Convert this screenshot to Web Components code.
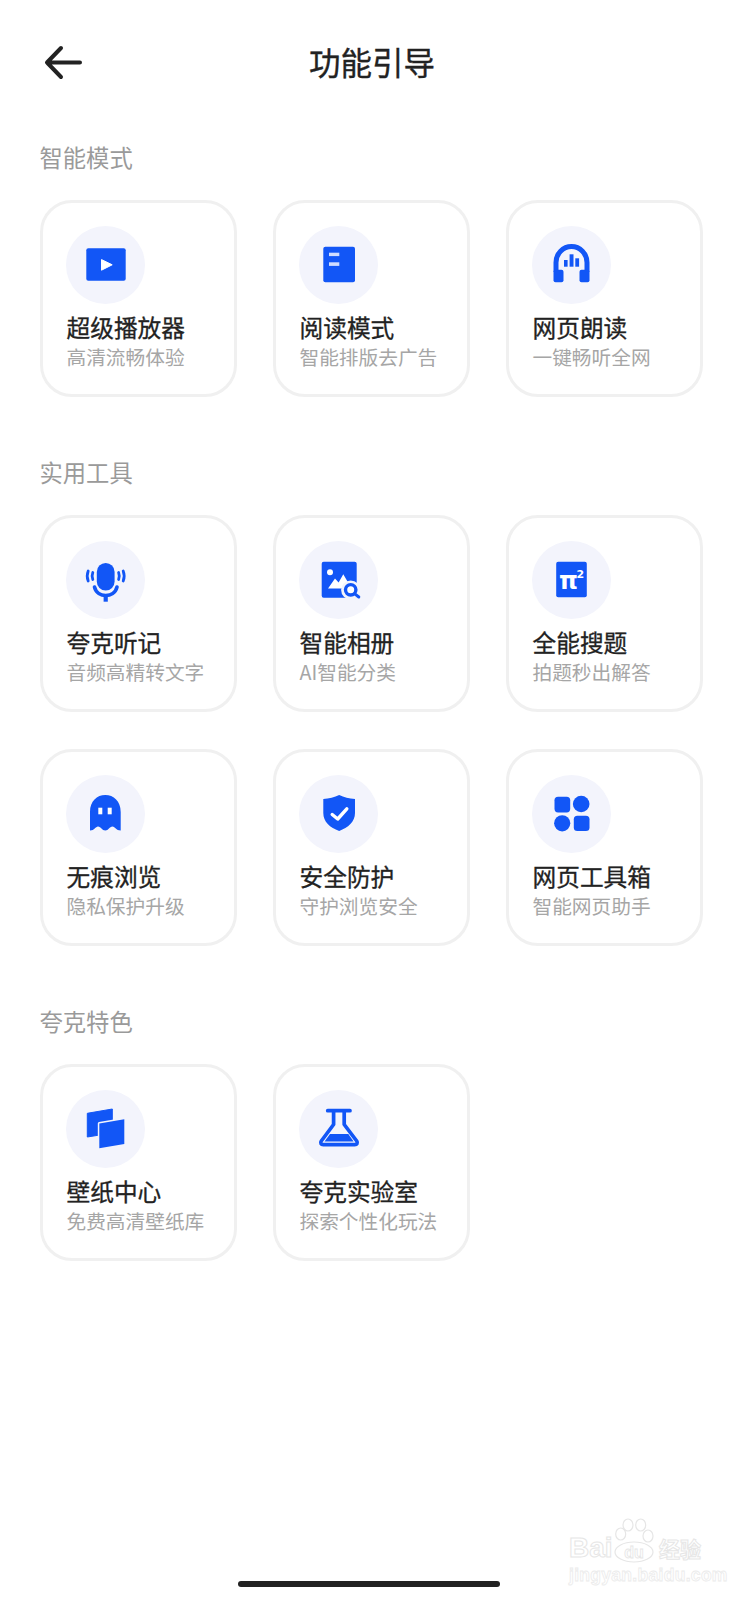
<!DOCTYPE html>
<html lang="zh">
<head>
<meta charset="utf-8">
<title>功能引导</title>
<style>
    html, body { margin: 0; background: #fff; }
    body { font-family: "Noto Sans CJK SC", "Noto Sans", sans-serif; }
</style>
</head>
<body>
<guide-page>
    <guide-header slot="header" title="功能引导"></guide-header>
    <guide-section label="智能模式">
        <guide-card icon="play" title="超级播放器" sub="高清流畅体验"></guide-card>
        <guide-card icon="book" title="阅读模式" sub="智能排版去广告"></guide-card>
        <guide-card icon="headphones" title="网页朗读" sub="一键畅听全网"></guide-card>
    </guide-section>
    <guide-section label="实用工具">
        <guide-card icon="mic" title="夸克听记" sub="音频高精转文字"></guide-card>
        <guide-card icon="album" title="智能相册" sub="AI智能分类"></guide-card>
        <guide-card icon="pi" title="全能搜题" sub="拍题秒出解答"></guide-card>
        <guide-card icon="ghost" title="无痕浏览" sub="隐私保护升级"></guide-card>
        <guide-card icon="shield" title="安全防护" sub="守护浏览安全"></guide-card>
        <guide-card icon="apps" title="网页工具箱" sub="智能网页助手"></guide-card>
    </guide-section>
    <guide-section label="夸克特色">
        <guide-card icon="layers" title="壁纸中心" sub="免费高清壁纸库"></guide-card>
        <guide-card icon="flask" title="夸克实验室" sub="探索个性化玩法"></guide-card>
    </guide-section>
    <baidu-mark></baidu-mark>
    <home-bar></home-bar>
</guide-page>

<script>
// all icons share a 79x78 box, same as the pale circle behind them
const BLUE = '#1256f6';
const DISC = '#f3f4fc';
const ICONS = {
    play: `<rect x="20.3" y="22.3" width="39.4" height="32.4" rx="2" fill="${BLUE}"/>
        <path d="M35.5 33.6 L46.2 38.8 L35.5 44.2 Z" fill="#fff" stroke="#fff" stroke-width="1" stroke-linejoin="round"/>`,
    book: `<rect x="24.3" y="20.7" width="31.7" height="35.6" rx="2" fill="${BLUE}"/>
        <rect x="30" y="26.7" width="10.3" height="3.4" fill="#cfdcff"/>
        <rect x="30" y="36.3" width="10.3" height="3.6" fill="#cfdcff"/>`,
    headphones: `<path d="M24 46 V36.5 A15.5 16 0 0 1 55 36.5 V46" fill="none" stroke="${BLUE}" stroke-width="5"/>
        <rect x="21.5" y="43.7" width="10" height="12.6" rx="2" fill="${BLUE}"/>
        <rect x="47.5" y="43.7" width="10" height="12.6" rx="2" fill="${BLUE}"/>
        <rect x="32" y="34" width="3.6" height="6.7" fill="${BLUE}"/>
        <rect x="37.6" y="28.3" width="3.9" height="12.4" fill="${BLUE}"/>
        <rect x="43.3" y="32.3" width="3.8" height="8.4" fill="${BLUE}"/>`,
    mic: `<rect x="30.8" y="22" width="17.8" height="27.5" rx="8.9" fill="${BLUE}"/>
        <path d="M28.5 46 C30 52 35 54.5 39.7 54.5 C44.5 54.5 49.5 52 51 46" fill="none" stroke="${BLUE}" stroke-width="3.6" stroke-linecap="round"/>
        <path d="M39.7 54.5 V60.7" stroke="${BLUE}" stroke-width="4.2"/>
        <path d="M22.2 30 C20.8 33.5 20.8 36.5 22.2 40 M26.8 31.5 C25.9 33.8 25.9 36.2 26.8 38.5 M52.6 31.5 C53.5 33.8 53.5 36.2 52.6 38.5 M57.2 30 C58.6 33.5 58.6 36.5 57.2 40" fill="none" stroke="${BLUE}" stroke-width="2.8" stroke-linecap="round"/>`,
    album: `<rect x="22.7" y="20.7" width="35" height="36" rx="2" fill="${BLUE}"/>
        <circle cx="31" cy="31.3" r="3" fill="#fff"/>
        <path d="M29 47.5 L36 37.5 L39.6 41.5 L44.3 33.3 L52.5 47.5 Z" fill="#fff"/>
        <circle cx="51.7" cy="49" r="9.6" fill="${DISC}"/>
        <circle cx="51.7" cy="48.8" r="5.2" fill="#fff" stroke="${BLUE}" stroke-width="3.4"/>
        <path d="M55.5 52.6 L59.8 56" stroke="${BLUE}" stroke-width="3" stroke-linecap="round"/>`,
    pi: `<rect x="24.2" y="20.7" width="30.6" height="35.6" rx="2" fill="${BLUE}"/>
        <text x="27" y="47.6" font-family="'DejaVu Sans', sans-serif" font-weight="700" font-size="24" fill="#fff">π</text>
        <text x="44.6" y="36.6" font-family="'DejaVu Sans', sans-serif" font-weight="700" font-size="11" fill="#fff">2</text>`,
    ghost: `<path d="M24 37 C24 26 31 20 39.3 20 C47.6 20 54.7 26 54.7 37 V55.5 C50 55.5 49 51.5 46.5 51.5 C43.5 51.5 42.5 55.5 39.3 55.5 C36 55.5 35 51.5 32 51.5 C29.5 51.5 28.5 55.5 24 55.5 Z" fill="${BLUE}"/>
        <rect x="32.3" y="32.7" width="4" height="6.6" fill="#fff"/>
        <rect x="41.7" y="32.7" width="4" height="6.6" fill="#fff"/>`,
    shield: `<path d="M40.2 20 C45 22.5 50 23.5 56 24 V38 C56 47 49 52.5 40.2 56 C31 52.5 24.3 47 24.3 38 V24 C30 23.5 35.5 22.5 40.2 20 Z" fill="${BLUE}"/>
        <path d="M33.2 39.5 L38.7 44 L47.8 33.8" fill="none" stroke="#fff" stroke-width="3.4" stroke-linecap="round" stroke-linejoin="round"/>`,
    apps: `<rect x="22.5" y="21.7" width="15.7" height="15.7" rx="3.6" fill="${BLUE}"/>
        <circle cx="49.2" cy="29" r="8.3" fill="${BLUE}"/>
        <circle cx="30.2" cy="48.3" r="8.1" fill="${BLUE}"/>
        <rect x="41.8" y="40.7" width="15.7" height="15.4" rx="3.6" fill="${BLUE}"/>`,
    layers: `<path d="M21.3 23.3 L46.3 19 V43 L21.3 47 Z" fill="${BLUE}" stroke="${BLUE}" stroke-width="1" stroke-linejoin="round"/>
        <path d="M33.3 33.5 L58.3 29.3 V54 L33.3 58.3 Z" fill="${BLUE}" stroke="${DISC}" stroke-width="3" paint-order="stroke" stroke-linejoin="round"/>`,
    flask: `<path d="M28.7 20.7 H51 M34.6 21 V34.5 L22.3 51 C21 53 22 54.6 24.3 54.6 H55.7 C58 54.6 59 53 57.7 51 L45.2 34.5 V21" fill="none" stroke="${BLUE}" stroke-width="3.7" stroke-linejoin="round" stroke-linecap="round"/>
        <path d="M31 44 H49.3 L54.6 51.4 H25.5 Z" fill="${BLUE}"/>`
};

class GuidePage extends HTMLElement {
    constructor() {
        super();
        this.attachShadow({mode: 'open'}).innerHTML = `
            <style>
                :host { display: block; position: relative; width: 742px; height: 1599px; overflow: hidden; background: #fff; }
                main { display: flex; flex-direction: column; gap: 58px; padding: 16px 39px 0 39.5px; }
            </style>
            <slot name="header"></slot>
            <main><slot></slot></main>
        `;
    }
}

class GuideHeader extends HTMLElement {
    connectedCallback() {
        this.attachShadow({mode: 'open'}).innerHTML = `
            <style>
                :host { display: grid; grid-template-columns: 1fr auto 1fr; align-items: center; height: 124px; padding: 0 38px 0 40px; box-sizing: border-box; }
                svg { display: block; }
                h1 { margin: -2px 0 0; font-size: 31.5px; line-height: 44px; font-weight: 400; -webkit-text-stroke: .35px #222; color: #222; }
            </style>
            <svg width="46" height="36" viewBox="0 0 46 36">
                <path d="M40 18.5 H7 M21 4 L7 18.5 L21 33" fill="none" stroke="#222" stroke-width="4" stroke-linecap="round" stroke-linejoin="round"/>
            </svg>
            <h1>${this.getAttribute('title')}</h1>
            <span></span>
        `;
    }
}

class GuideSection extends HTMLElement {
    connectedCallback() {
        this.attachShadow({mode: 'open'}).innerHTML = `
            <style>
                :host { display: block; }
                h2 { margin: 0 0 26px; font-size: 23.3px; line-height: 34px; font-weight: 400; color: #9a9a9a; }
                .grid { display: grid; grid-template-columns: repeat(3, 197.5px); column-gap: 35.5px; row-gap: 37px; }
            </style>
            <h2>${this.getAttribute('label')}</h2>
            <div class="grid"><slot></slot></div>
        `;
    }
}

class GuideCard extends HTMLElement {
    connectedCallback() {
        this.attachShadow({mode: 'open'}).innerHTML = `
            <style>
                :host { display: block; box-sizing: border-box; width: 197.5px; height: 197px; padding: 23px; border: 3px solid #f0f0f0; border-radius: 32px; background: #fff; }
                .disc { width: 79px; height: 78px; border-radius: 50%; background: ${DISC}; }
                svg { display: block; }
                .title { margin: 8px 0 0 1px; font-size: 23.7px; line-height: 30px; font-weight: 400; -webkit-text-stroke: .3px #222; color: #222; white-space: nowrap; }
                .sub { margin: 1px 0 0 1px; font-size: 19.7px; line-height: 28px; color: #a6a6a6; white-space: nowrap; }
            </style>
            <div class="disc"><svg width="79" height="78" viewBox="0 0 79 78">${ICONS[this.getAttribute('icon')]}</svg></div>
            <div class="title">${this.getAttribute('title')}</div>
            <div class="sub">${this.getAttribute('sub')}</div>
        `;
    }
}

class BaiduMark extends HTMLElement {
    constructor() {
        super();
        this.attachShadow({mode: 'open'}).innerHTML = `
            <style>
                :host { position: absolute; left: 567px; top: 1516px; width: 140px; height: 72px; display: block; color: transparent; font-family: "Liberation Sans", sans-serif; }
                svg { position: absolute; left: 44px; top: 0; }
                text { font-weight: 700; font-size: 16px; fill: transparent; stroke: #e6e6e6; stroke-width: .8px; }
                .row { position: absolute; left: 2px; top: 18px; width: 132px; display: flex; align-items: center; justify-content: space-between; font-size: 28px; line-height: 28px; font-weight: 700; -webkit-text-stroke: 1px #e6e6e6; }
                .cjk { font-family: "Noto Sans CJK SC", sans-serif; font-size: 21px; }
                .url { position: absolute; left: 2px; top: 48.5px; font-size: 17.5px; line-height: 20px; font-weight: 700; letter-spacing: .3px; -webkit-text-stroke: .8px #ebebeb; white-space: nowrap; }
            </style>
            <svg width="46" height="50" viewBox="0 0 46 50" fill="none" stroke="#e6e6e6" stroke-width="1.2">
                <ellipse cx="9.7" cy="18" rx="5" ry="6"/>
                <ellipse cx="17" cy="9" rx="5" ry="6"/>
                <ellipse cx="29.7" cy="9" rx="5" ry="6"/>
                <ellipse cx="37" cy="20" rx="5" ry="6"/>
                <ellipse cx="23" cy="36" rx="19" ry="10"/>
                <text x="23" y="42" text-anchor="middle">du</text>
            </svg>
            <div class="row"><span>Bai</span><span class="cjk">经验</span></div>
            <div class="url">jingyan.baidu.com</div>
        `;
    }
}

class HomeBar extends HTMLElement {
    constructor() {
        super();
        this.attachShadow({mode: 'open'}).innerHTML = `
            <style>
                :host { position: absolute; left: 238px; top: 1581px; width: 262px; height: 6px; border-radius: 3px; background: #222; display: block; }
            </style>
        `;
    }
}

customElements.define('guide-page', GuidePage);
customElements.define('guide-header', GuideHeader);
customElements.define('guide-section', GuideSection);
customElements.define('guide-card', GuideCard);
customElements.define('baidu-mark', BaiduMark);
customElements.define('home-bar', HomeBar);
</script>
</body>
</html>
